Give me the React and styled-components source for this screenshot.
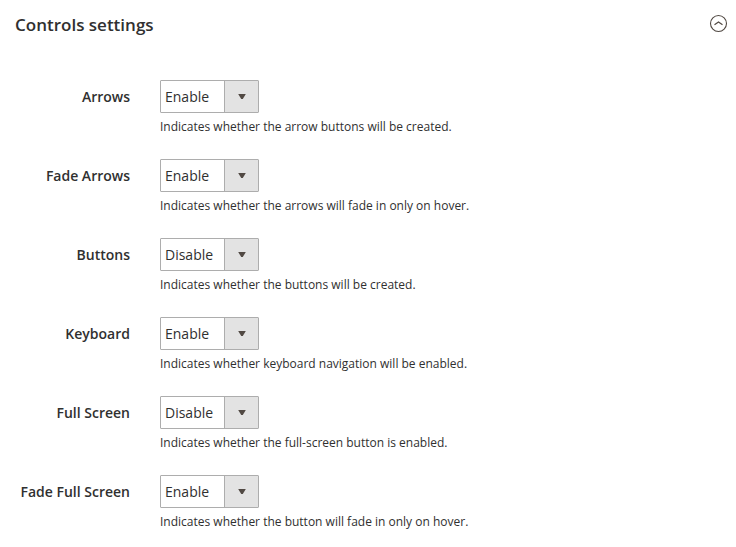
import React, { useId, useState } from "react";
import styled, { createGlobalStyle } from "styled-components";

const GlobalStyle = createGlobalStyle`
  *, *::before, *::after { box-sizing: border-box; }
  body {
    margin: 0;
    background: #fff;
    color: #303030;
    font-family: "Open Sans", "Noto Sans", sans-serif;
    font-size: 14px;
  }
`;

const Section = styled.section`
  padding: 13px 7px 0 15px;
`;

const Header = styled.header`
  display: flex;
  align-items: flex-start;
  justify-content: space-between;
  height: 24px;
`;

const Title = styled.h2`
  margin: 0;
  font-size: 17px;
  font-weight: 600;
  line-height: 24px;
`;

const ToggleButton = styled.button`
  display: flex;
  padding: 0;
  border: 0;
  background: none;
  color: #514943;
  cursor: pointer;
`;

const Fields = styled.div`
  display: grid;
  gap: 22px;
  padding-top: 43px;
`;

const Field = styled.div`
  display: grid;
  grid-template-columns: 115px 1fr;
  column-gap: 30px;
`;

const Label = styled.label`
  font-weight: 600;
  line-height: 33px;
  text-align: right;
  white-space: nowrap;
`;

const Control = styled.div`
  display: flex;
  flex-direction: column;
  align-items: flex-start;
`;

const SelectBox = styled.div`
  display: grid;
  grid-template-columns: 1fr 34px;
  border: 1px solid #adadad;
  border-radius: 1px;
  background: #fff;
`;

const Select = styled.select`
  grid-area: 1 / 1 / 2 / 3;
  width: 97px;
  height: 31px;
  padding: 0 34px 0 4px;
  appearance: none;
  border: 0;
  background: none;
  color: #303030;
  font: inherit;
  cursor: pointer;
`;

const ArrowCell = styled.span`
  grid-area: 1 / 2 / 2 / 3;
  display: flex;
  align-items: center;
  justify-content: center;
  border-left: 1px solid #adadad;
  background: #e3e3e3;
  pointer-events: none;
`;

const Note = styled.p`
  margin: 4px 0 0;
  font-size: 12px;
  line-height: 20px;
`;

const fields = [
  { label: "Arrows", value: "Enable", note: "Indicates whether the arrow buttons will be created." },
  { label: "Fade Arrows", value: "Enable", note: "Indicates whether the arrows will fade in only on hover." },
  { label: "Buttons", value: "Disable", note: "Indicates whether the buttons will be created." },
  { label: "Keyboard", value: "Enable", note: "Indicates whether keyboard navigation will be enabled." },
  { label: "Full Screen", value: "Disable", note: "Indicates whether the full-screen button is enabled." },
  { label: "Fade Full Screen", value: "Enable", note: "Indicates whether the button will fade in only on hover." },
];

function SelectField({ label, value, note }) {
  const id = useId();
  return (
    <Field>
      <Label htmlFor={id}>{label}</Label>
      <Control>
        <SelectBox>
          <Select id={id} defaultValue={value} aria-describedby={`${id}-note`}>
            <option>Enable</option>
            <option>Disable</option>
          </Select>
          <ArrowCell>
            <svg width="8" height="5" viewBox="0 0 8 5" aria-hidden="true">
              <path d="M0.2 0h7.6L4.8 5H3.2z" fill="#514943" />
            </svg>
          </ArrowCell>
        </SelectBox>
        <Note id={`${id}-note`}>{note}</Note>
      </Control>
    </Field>
  );
}

export default function App() {
  const [open, setOpen] = useState(true);
  return (
    <>
      <GlobalStyle />
      <Section>
        <Header>
          <Title>Controls settings</Title>
          <ToggleButton type="button" aria-label="Toggle controls settings" aria-expanded={open} onClick={() => setOpen(!open)}>
            <svg width="21" height="21" viewBox="0 0 21 21" fill="none" stroke="currentColor" aria-hidden="true">
              <circle cx="10.5" cy="10.5" r="8" strokeWidth="1.1" />
              <path d={open ? "M6.5 11.8l4-2.8 4 2.8" : "M6.5 9l4 2.8 4-2.8"} strokeWidth="1.2" />
            </svg>
          </ToggleButton>
        </Header>
        {open && (
          <Fields>
            {fields.map((field) => (
              <SelectField key={field.label} {...field} />
            ))}
          </Fields>
        )}
      </Section>
    </>
  );
}
